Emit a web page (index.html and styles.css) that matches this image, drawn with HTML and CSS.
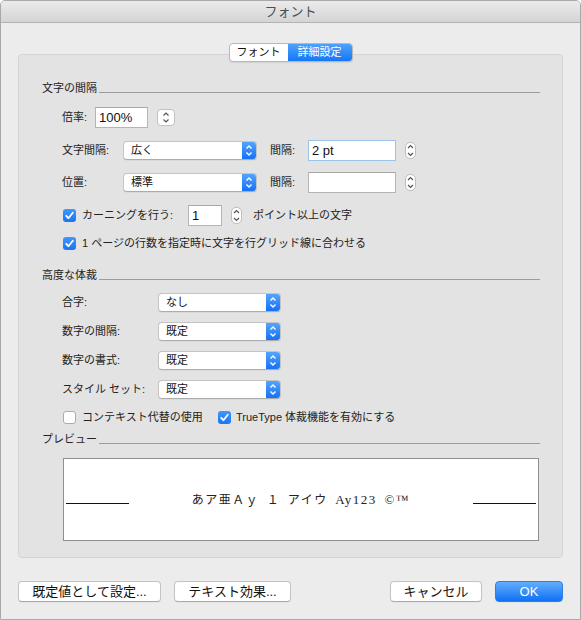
FILE: index.html
```html
<!DOCTYPE html>
<html lang="ja">
<head>
<meta charset="utf-8">
<title>フォント</title>
<link rel="stylesheet" href="styles.css">
</head>
<body>
<div class="window">
  <div class="titlebar">フォント</div>
  <div class="content">
    <div class="tabs">
      <div class="seg">
        <span class="tab tab-a">フォント</span>
        <span class="tab tab-b">詳細設定</span>
      </div>
    </div>
    <div class="box">
      <div class="section-head"><span>文字の間隔</span><i class="rule"></i></div>

      <div class="row m10">
        <span class="lbl w33">倍率:</span>
        <span class="field w53">100%</span>
        <span class="stepper-sq"><svg width="18" height="17" viewBox="0 0 18 17"><path d="M6.5 6.5 9 4 11.5 6.5M6.5 10.5 9 13 11.5 10.5" fill="none" stroke="#555" stroke-width="1.2"/></svg></span>
      </div>

      <div class="row m11">
        <span class="lbl w61">文字間隔:</span>
        <span class="popup w134"><span class="ptext">広く</span><span class="parrow"><svg width="14" height="19" viewBox="0 0 14 19"><path d="M4.5 7.5 7 5 9.5 7.5M4.5 11.5 7 14 9.5 11.5" fill="none" stroke="#fff" stroke-width="1.4"/></svg></span></span>
        <span class="lbl gap-lbl">間隔:</span>
        <span class="field w88 focus">2 pt</span>
        <span class="stepper"><svg width="11" height="17" viewBox="0 0 11 17"><path d="M3 6 5.5 3.5 8 6M3 11 5.5 13.5 8 11" fill="none" stroke="#555" stroke-width="1.2"/></svg></span>
      </div>

      <div class="row m10">
        <span class="lbl w61">位置:</span>
        <span class="popup w134"><span class="ptext">標準</span><span class="parrow"><svg width="14" height="19" viewBox="0 0 14 19"><path d="M4.5 7.5 7 5 9.5 7.5M4.5 11.5 7 14 9.5 11.5" fill="none" stroke="#fff" stroke-width="1.4"/></svg></span></span>
        <span class="lbl gap-lbl">間隔:</span>
        <span class="field w88"></span>
        <span class="stepper"><svg width="11" height="17" viewBox="0 0 11 17"><path d="M3 6 5.5 3.5 8 6M3 11 5.5 13.5 8 11" fill="none" stroke="#555" stroke-width="1.2"/></svg></span>
      </div>

      <div class="row m11">
        <span class="cb on"><svg width="13" height="13" viewBox="0 0 13 13"><path d="M3.2 6.8 5.4 9.2 9.8 3.8" fill="none" stroke="#fff" stroke-width="1.8" stroke-linecap="round" stroke-linejoin="round"/></svg></span>
        <span class="cbtext w106">カーニングを行う:</span>
        <span class="field w34">1</span>
        <span class="stepper"><svg width="11" height="17" viewBox="0 0 11 17"><path d="M3 6 5.5 3.5 8 6M3 11 5.5 13.5 8 11" fill="none" stroke="#555" stroke-width="1.2"/></svg></span>
        <span class="lbl after">ポイント以上の文字</span>
      </div>

      <div class="row m6">
        <span class="cb on"><svg width="13" height="13" viewBox="0 0 13 13"><path d="M3.2 6.8 5.4 9.2 9.8 3.8" fill="none" stroke="#fff" stroke-width="1.8" stroke-linecap="round" stroke-linejoin="round"/></svg></span>
        <span class="cbtext">1 ページの行数を指定時に文字を行グリッド線に合わせる</span>
      </div>

      <div class="section-head m13"><span>高度な体裁</span><i class="rule"></i></div>

      <div class="row m8">
        <span class="lbl w96">合字:</span>
        <span class="popup w123"><span class="ptext">なし</span><span class="parrow"><svg width="14" height="19" viewBox="0 0 14 19"><path d="M4.5 7.5 7 5 9.5 7.5M4.5 11.5 7 14 9.5 11.5" fill="none" stroke="#fff" stroke-width="1.4"/></svg></span></span>
      </div>
      <div class="row m7">
        <span class="lbl w96">数字の間隔:</span>
        <span class="popup w123"><span class="ptext">既定</span><span class="parrow"><svg width="14" height="19" viewBox="0 0 14 19"><path d="M4.5 7.5 7 5 9.5 7.5M4.5 11.5 7 14 9.5 11.5" fill="none" stroke="#fff" stroke-width="1.4"/></svg></span></span>
      </div>
      <div class="row m7">
        <span class="lbl w96">数字の書式:</span>
        <span class="popup w123"><span class="ptext">既定</span><span class="parrow"><svg width="14" height="19" viewBox="0 0 14 19"><path d="M4.5 7.5 7 5 9.5 7.5M4.5 11.5 7 14 9.5 11.5" fill="none" stroke="#fff" stroke-width="1.4"/></svg></span></span>
      </div>
      <div class="row m7">
        <span class="lbl w96">スタイル セット:</span>
        <span class="popup w123"><span class="ptext">既定</span><span class="parrow"><svg width="14" height="19" viewBox="0 0 14 19"><path d="M4.5 7.5 7 5 9.5 7.5M4.5 11.5 7 14 9.5 11.5" fill="none" stroke="#fff" stroke-width="1.4"/></svg></span></span>
      </div>

      <div class="row m6">
        <span class="cbgroup w155">
          <span class="cb"></span>
          <span class="cbtext">コンテキスト代替の使用</span>
        </span>
        <span class="cbgroup">
          <span class="cb on"><svg width="13" height="13" viewBox="0 0 13 13"><path d="M3.2 6.8 5.4 9.2 9.8 3.8" fill="none" stroke="#fff" stroke-width="1.8" stroke-linecap="round" stroke-linejoin="round"/></svg></span>
          <span class="cbtext t5">TrueType 体裁機能を有効にする</span>
        </span>
      </div>

      <div class="section-head m3"><span>プレビュー</span><i class="rule"></i></div>

      <div class="preview">
        <span class="pline"></span>
        <span class="ptxt">あア亜Ａｙ １ アイウ <span class="lat">Ay123 ©™</span></span>
        <span class="pline"></span>
      </div>
    </div>

    <div class="buttons">
      <span class="btn w143">既定値として設定...</span>
      <span class="btn w117">テキスト効果...</span>
      <span class="spacer"></span>
      <span class="btn w92">キャンセル</span>
      <span class="btn btn-ok w68">OK</span>
    </div>
  </div>
</div>
</body>
</html>
```
FILE: styles.css
```css
* { box-sizing: border-box; }
html, body { margin: 0; padding: 0; background: #ffffff; }
body {
  width: 581px;
  height: 620px;
  overflow: hidden;
  font-family: "Liberation Sans", "Noto Sans CJK JP", sans-serif;
  color: #222222;
}
.window {
  width: 581px;
  height: 620px;
  border: 1px solid #a9a9a9;
  border-radius: 5px 5px 0 0;
  background: #ececec;
  overflow: hidden;
  display: flex;
  flex-direction: column;
}
.titlebar {
  height: 22px;
  flex: none;
  background: linear-gradient(#ebebeb, #d4d4d4);
  border-bottom: 1px solid #b3b3b3;
  text-align: center;
  font-size: 13px;
  line-height: 21px;
  color: #4d4d4d;
}
.content {
  flex: 1;
  padding: 20px 17px 0;
  display: flex;
  flex-direction: column;
}
.tabs {
  display: flex;
  justify-content: center;
  position: relative;
  z-index: 1;
  height: 19px;
  flex: none;
}
.seg {
  display: flex;
  height: 19px;
  border: 1px solid #b8b8b8;
  border-radius: 4px;
  overflow: hidden;
  background: #ffffff;
  box-shadow: 0 1px 1px rgba(0, 0, 0, 0.08);
}
.tab {
  font-size: 11px;
  line-height: 17px;
  text-align: center;
  color: #111111;
}
.tab-a { width: 58px; }
.tab-b {
  width: 64px;
  color: #ffffff;
  background: linear-gradient(#4ea2fc, #1677f6);
}
.box {
  margin-top: -8px;
  height: 504px;
  flex: none;
  border: 1px solid #d4d4d4;
  border-radius: 4px;
  background: #e3e3e3;
  padding: 25px 22px 0 23px;
  display: flex;
  flex-direction: column;
}
.section-head {
  display: flex;
  height: 16px;
  font-size: 11px;
  line-height: 16px;
  color: #222222;
  flex: none;
}
.rule {
  flex: 1;
  height: 13px;
  margin-left: 2px;
  border-bottom: 1px solid #9b9b9b;
}
.row {
  display: flex;
  align-items: center;
  height: 22px;
  padding-left: 20px;
  flex: none;
  font-size: 11px;
}
.m3 { margin-top: 3px; }
.m6 { margin-top: 6px; }
.m7 { margin-top: 7px; }
.m8 { margin-top: 8px; }
.m10 { margin-top: 10px; }
.m11 { margin-top: 11px; }
.m13 { margin-top: 13px; }
.lbl { flex: none; line-height: 16px; color: #222222; }
.w33 { width: 33px; }
.w61 { width: 61px; }
.w96 { width: 96px; }
.gap-lbl { width: 38px; margin-left: 13px; }
.after { margin-left: 11px; }
.field {
  flex: none;
  height: 21px;
  background: #ffffff;
  border: 1px solid #b5b5b5;
  border-top-color: #a8a8a8;
  font-size: 13px;
  line-height: 19px;
  padding-left: 3px;
  color: #111111;
}
.focus { border-color: #9cc3ea; }
.w53 { width: 53px; }
.w88 { width: 88px; }
.w34 { width: 34px; }
.stepper-sq {
  flex: none;
  width: 18px;
  height: 17px;
  margin-left: 9px;
  background: #ffffff;
  border: 1px solid #c2c2c2;
  border-radius: 4px;
  display: flex;
  align-items: center;
  justify-content: center;
  overflow: hidden;
}
.stepper-sq svg, .stepper svg { flex: none; }
.stepper {
  flex: none;
  width: 11px;
  height: 17px;
  margin-left: 9px;
  background: #ffffff;
  border: 1px solid #bdbdbd;
  border-radius: 5px;
  display: flex;
  align-items: center;
  justify-content: center;
  overflow: hidden;
}
.popup {
  flex: none;
  display: flex;
  height: 19px;
  background: #ffffff;
  border: 1px solid #c4c4c4;
  border-bottom-color: #acacac;
  border-radius: 4px;
  overflow: hidden;
  box-shadow: 0 0.5px 0.5px rgba(0, 0, 0, 0.08);
}
.w134 { width: 134px; }
.w123 { width: 123px; }
.ptext {
  flex: 1;
  padding-left: 7px;
  font-size: 11px;
  line-height: 17px;
  color: #111111;
}
.parrow {
  flex: none;
  width: 14px;
  height: 17px;
  background: linear-gradient(#52a5fd, #1671f5);
  display: flex;
  align-items: center;
  justify-content: center;
}
.cb {
  flex: none;
  width: 13px;
  height: 13px;
  margin-left: 1px;
  border-radius: 3px;
  background: #ffffff;
  border: 1px solid #ababab;
  display: flex;
}
.cb.on {
  border: none;
  background: linear-gradient(#3f98fc, #1a74f5);
}
.cbtext {
  flex: none;
  margin-left: 6px;
  line-height: 16px;
  color: #222222;
}
.t5 { margin-left: 5px; }
.w106 { width: 106px; }
.cbgroup { display: flex; align-items: center; flex: none; }
.w155 { width: 155px; }
.preview {
  margin-top: 11px;
  margin-left: 21px;
  width: 476px;
  height: 83px;
  flex: none;
  background: #ffffff;
  border: 1px solid #8f8f8f;
  display: flex;
  align-items: center;
  padding: 0 2px;
}
.pline {
  flex: none;
  width: 63px;
  height: 1px;
  margin-top: 7px;
  background: #111111;
}
.ptxt {
  flex: 1;
  text-align: center;
  font-family: "Liberation Serif", "Noto Sans CJK JP", serif;
  font-size: 12px;
  line-height: 16px;
  color: #222222;
  letter-spacing: 1.5px;
  word-spacing: 3px;
}
.lat { font-size: 13px; }
.buttons {
  display: flex;
  margin-top: 23px;
  gap: 13px;
  flex: none;
}
.spacer { flex: 1; }
.btn {
  flex: none;
  height: 21px;
  background: #ffffff;
  border: 1px solid #c3c3c3;
  border-bottom-color: #a9a9a9;
  border-radius: 4px;
  font-size: 13px;
  line-height: 19px;
  text-align: center;
  color: #111111;
  box-shadow: 0 0.5px 0.5px rgba(0, 0, 0, 0.06);
}
.btn-ok {
  color: #ffffff;
  border-color: #2a7fe8;
  background: linear-gradient(#63aefc, #0f72f5);
}
.w143 { width: 143px; }
.w117 { width: 117px; }
.w92 { width: 92px; }
.w68 { width: 68px; }
```
